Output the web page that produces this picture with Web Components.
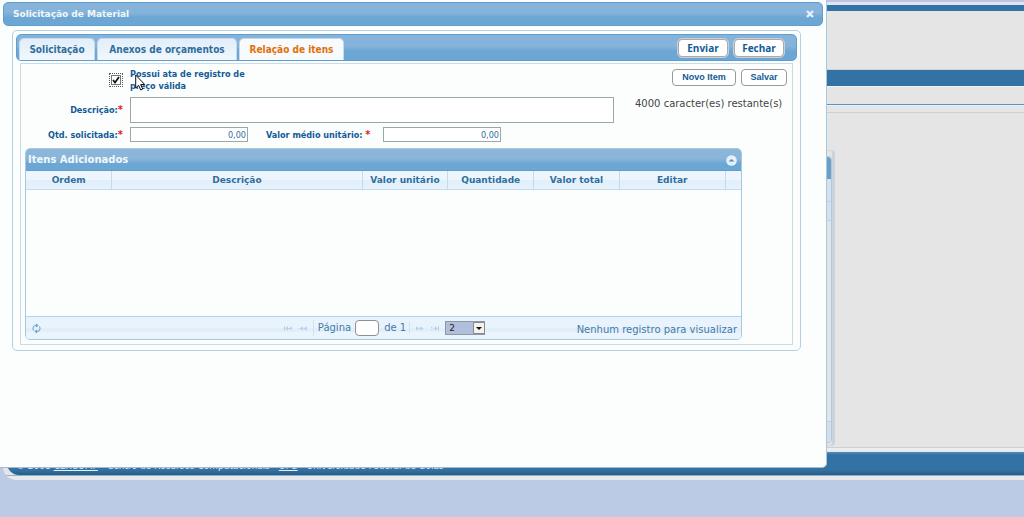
<!DOCTYPE html>
<html lang="pt-BR">
<head>
<meta charset="utf-8">
<title>Solicitação de Material</title>
<style>
html{background:#bccbe5}
body{margin:0;font:10px/12px "DejaVu Sans","Open Sans",sans-serif;color:#444;min-height:100vh;position:relative;overflow:hidden}
</style>
</head>
<body>
<app-shell></app-shell>
<material-dialog heading="Solicitação de Material">
  <tab-panel>
    <item-form></item-form>
    <items-grid></items-grid>
  </tab-panel>
</material-dialog>
<mouse-pointer></mouse-pointer>
<script>
const define = (name, html, setup) => customElements.define(name, class extends HTMLElement {
  constructor() {
    super();
    const t = document.createElement('template');
    t.innerHTML = html;
    this.attachShadow({ mode: 'open' }).append(t.content.cloneNode(true));
  }
  connectedCallback() { if (setup) setup(this, this.shadowRoot); }
});

define('app-shell', `
<style>
:host{display:flex;flex-direction:column;height:calc(100vh - 36px);background:#e5e5e5;margin-left:3px;border-radius:0 0 0 14px;overflow:hidden;border-bottom:1px solid #c4cbdc;box-sizing:border-box}
.top{flex:none;height:6px;background:#3272a4;border-top:3px solid #dde6f2;margin-top:2px;box-shadow:0 -2px #bfc3df}
.banner{flex:none;height:58px}
.menu{flex:none;height:16px;background:#3272a4;border-top:1px solid #d2d2d2;border-bottom:1px solid #f2f2f2}
.sub{flex:none;height:17px;border-bottom:1px solid #5f92bd}
.crumb{flex:none;height:6px;border-top:1px solid #e9f1f7;border-bottom:1px solid #cfcfcf}
main{flex:1;padding-top:37px;box-sizing:border-box}
.behind{box-sizing:border-box;height:calc(100% - 1px);width:calc(100% - 189px);border:1px solid #d2d8de;border-right:3px solid #cbd3dc;border-radius:4px;padding:5px 0 2px}
.inner{height:100%;box-sizing:border-box;border:1px solid #b3c8dc;border-left:0;border-radius:4px;background:#e0e6e8;display:flex;flex-direction:column}
.bar{height:22px;background:#6b9fc8;border-radius:0 4px 0 0}
.row{height:22px;background:#d5e2ec;border-bottom:1px solid #bcd0df}
.row + .row{height:18px}
.foot{height:20px;margin-top:auto;background:#d5dfe8;border-top:1px solid #c2cfda}
footer{flex:none;border-top:1px solid #cfcfcf;box-shadow:inset 0 3px #e9eef1;padding-top:4px}
.credits{height:23px;box-sizing:border-box;padding:8px 9px 0;background:linear-gradient(#5c8db3,#3272a4 3px,#3272a4 18px,#295c83);border-radius:0 0 0 12px;margin-left:4px;color:#e4eef5;font:9px/12px "DejaVu Sans",sans-serif;white-space:nowrap}
.edge{height:4px;background:#e8e9ea;border-top:1px solid #8bb2d3}
a{color:inherit}
</style>
<div class="top"></div><div class="banner"></div><div class="menu"></div><div class="sub"></div><div class="crumb"></div>
<main><div class="behind"><div class="inner"><div class="bar"></div><div class="row"></div><div class="row"></div><div class="foot"></div></div></div></main>
<footer><div class="credits">© 2008 <a href="#">CERCOMP</a> - Centro de Recursos Computacionais - <a href="#">UFG</a> - Universidade Federal de Goiás</div><div class="edge"></div></footer>
`);

define('material-dialog', `
<style>
:host{display:flex;flex-direction:column;position:absolute;top:0;left:0;width:calc(100% - 197px);height:calc(100vh - 49px);box-sizing:border-box;background:#fcfefe;border-right:1px solid #a6c9e2;border-bottom:1px solid #a6b9ce;border-radius:0 0 5px 0;padding:2px 3px 2px 3px}
header{display:flex;align-items:center;justify-content:space-between;height:24px;box-sizing:border-box;border:1px solid #5f9fcf;border-radius:5px;padding:0 7px 0 9px;background:linear-gradient(#86b3d9 45%,#6ca6d4 65%);color:#f1f8fa}
h1{font:bold 9px/12px "DejaVu Sans",sans-serif;margin:0}
button{border:0;background:none;padding:0;width:10px;height:10px;display:flex}
section{padding:4px 22px 0 9px}
</style>
<header><h1></h1><button aria-label="Fechar janela"><svg viewBox="0 0 10 10" width="10" height="10"><path d="M2 2l6 6M8 2L2 8" stroke="#e4f1fa" stroke-width="2.400"/></svg></button></header>
<section><slot></slot></section>
`, (el, r) => { r.querySelector('h1').textContent = el.getAttribute('heading'); });

define('tab-panel', `
<style>
:host{display:block;border:1px solid #b5cfe2;border-radius:5px;padding:3px 3px 5px;background:#fcfefe}
.bar{display:flex;align-items:flex-end;height:27px;box-sizing:border-box;border:1px solid #5f9fcf;border-radius:5px;padding:0 12px 0 2px;background:linear-gradient(#86b3d9 45%,#6ca6d4 65%);gap:2px}
button{font:bold 10px/14px "DejaVu Sans Condensed","DejaVu Sans",sans-serif}
[role=tab]{height:22px;border:1px solid #c5dbec;border-bottom:0;border-radius:5px 5px 0 0;background:linear-gradient(#e2eefa,#f1f7fc);color:#2e6e9e;padding:0}
[role=tab][aria-selected=true]{background:#f8fbfd;color:#e17009}
.t1{width:76px}.t2{width:140px}.t3{width:105px}
.actions{margin-left:auto;display:flex;gap:6px;align-self:center}
.actions button{font:bold 10px/12px "Open Sans",sans-serif;width:50px;height:18px;box-sizing:border-box;border:1px solid #aaa;outline:1px solid #c9cfd4;border-radius:4px;background:#fff;color:#125a95;padding:0}
.panel{margin:2px 4px 0 4px;border:1px solid #c9dbe6;padding:3px 4px 4px}
</style>
<div class="bar" role="tablist">
<button role="tab" class="t1">Solicitação</button><button role="tab" class="t2">Anexos de orçamentos</button><button role="tab" class="t3" aria-selected="true">Relação de itens</button>
<div class="actions"><button>Enviar</button><button>Fechar</button></div></div>
<div class="panel" role="tabpanel"><slot></slot></div>
`);

define('item-form', `
<style>
:host{display:block}
form{display:grid;grid-template-columns:98px 484px 1fr;column-gap:7px;grid-template-rows:30px 26px 23px;color:#125a95}
label{font:bold 9px/12px "DejaVu Sans Condensed","DejaVu Sans",sans-serif;text-align:right;white-space:nowrap}
label b{color:#e8192c;font-size:11px;line-height:10px}
.check{text-align:left;width:124px;white-space:normal;padding-top:1px}
.tick{justify-self:end;margin:6px 0 0;width:14px;height:14px;display:grid;place-items:center;border:1px dotted #555;box-sizing:border-box}
.tick input{appearance:none;margin:0;width:10px;height:10px;box-sizing:border-box;border:1px solid #777;background:#fff;grid-area:1/1}
.tick svg{grid-area:1/1;pointer-events:none}
input[type=text],textarea{font:9px/12px "DejaVu Sans Condensed","DejaVu Sans",sans-serif;color:#2e6e9e;border:1px solid #9aa8a6;background:#fff;box-sizing:border-box;border-radius:0;margin:0;padding:0 1px;text-align:right}
textarea{width:100%;height:26px;resize:none;display:block;text-align:left}
.l{align-self:center}
.num{width:118px;height:15px}
.pair{display:flex;align-items:center}
.pair label{width:110px;margin:0 7px 0 18px;text-align:left}
.buttons{display:flex;gap:5px;justify-content:flex-end;align-items:center;height:20px;padding-right:1px}
button{font:bold 9px/12px "Liberation Sans",sans-serif;color:#125a95;width:64px;height:17px;border:1px solid #999;border-radius:4px;background:#fff;padding:0;white-space:nowrap;box-sizing:border-box}
button:last-child{width:46px}
.left{color:#444;padding:1px 0 0 14px;white-space:nowrap}
</style>
<form onsubmit="return false">
<span class="tick"><input id="ata" type="checkbox" checked><svg width="8" height="8" viewBox="0 0 8 8"><path d="M1 4l2 2.500L7 1" fill="none" stroke="#111" stroke-width="1.700"/></svg></span>
<label class="check" for="ata">Possui ata de registro de preço válida</label>
<div class="buttons"><button>Novo Item</button><button>Salvar</button></div>
<label class="l" for="desc">Descrição:<b>*</b></label><textarea id="desc"></textarea><div class="left">4000 caracter(es) restante(s)</div>
<label class="l" for="qtd">Qtd. solicitada:<b>*</b></label>
<div class="pair"><input class="num" type="text" id="qtd" value="0,00"><label for="val">Valor médio unitário: <b>*</b></label><input class="num" type="text" id="val" value="0,00"></div>
</form>
`);

define('items-grid', `
<style>
:host{display:block;margin:2px 46px 0 0;border:1px solid #a6c9e2;border-radius:5px;background:#fcfefe}
header{display:flex;align-items:center;justify-content:space-between;height:21px;box-sizing:border-box;padding:1px 4px 0 2px;height:22px;background:linear-gradient(#8bb5d9 45%,#6ca6d4 70%);border-bottom:1px solid #5f9fcf;border-radius:4px 4px 0 0;color:#f1f8fa}
h2{margin:0;font:bold 10px/12px "DejaVu Sans",sans-serif}
header button{width:11px;height:11px;padding:0;border:0;background:none;display:flex}
table{width:100%;border-collapse:collapse;table-layout:fixed}
th{height:18px;padding:0;border-right:1px solid #c5dbec;border-bottom:1px solid #c5dbec;background:linear-gradient(#eff5fc 50%,#e0effb 51%,#e6f2fb);color:#2e6e9e;font:bold 9px/12px "DejaVu Sans",sans-serif;white-space:nowrap}
th:last-child{border-right:0}
.body{height:126px}
footer{display:grid;grid-template-columns:1fr auto 1fr;align-items:center;height:22px;background:linear-gradient(#e9f3fd 50%,#e3eef9 52%,#e3eef9 65%,#eaf4fd 70%);border-top:1px solid #b5d2e6;border-radius:0 0 4px 4px;padding:0 4px 0 5px;color:#427ba8}
svg{display:block}
footer button{border:0;padding:0;background:none}
.refresh{justify-self:start}
.pages{display:flex;align-items:center;gap:5px}
.pages label{display:flex;align-items:center;gap:4px;border-left:1px solid #d5e2ec;padding-left:4px}
.pages input{width:24px;height:16px;box-sizing:border-box;border:1px solid #909090;border-radius:4px;background:#fff;margin:0;font:inherit}
.of{border-right:1px solid #d5e2ec;padding-right:3px}
.size{display:grid;align-items:center;justify-items:end}
.size>*{grid-area:1/1}
.size svg{pointer-events:none}
select{appearance:none;width:40px;height:14px;border:1px solid #8d97a5;border-radius:0;background:#b1bfdc;font:9px/12px "DejaVu Sans",sans-serif;color:#222;padding:0 3px;margin:0}
.info{text-align:right;padding-top:3px}
</style>
<header><h2>Itens Adicionados</h2><button aria-label="Recolher"><svg width="11" height="11" viewBox="0 0 11 11"><circle cx="5.500" cy="5.500" r="5.300" fill="#e3f1fb"/><path d="M2.500 6.500L5.500 4l3 2.500z" fill="#5c89ae"/></svg></button></header>
<table><colgroup><col style="width:12%"><col style="width:35%"><col style="width:12%"><col style="width:12%"><col style="width:12%"><col><col style="width:16px"></colgroup>
<thead><tr><th>Ordem</th><th>Descrição</th><th>Valor unitário</th><th>Quantidade</th><th>Valor total</th><th>Editar</th><th></th></tr></thead></table>
<div class="body"></div>
<footer>
<button aria-label="Atualizar" class="refresh"><svg width="11" height="11" viewBox="0 0 11 11" fill="none" stroke="#6da8d2" stroke-width="1.100"><path d="M6.500 2.500H5a3 3 0 0 0-2.300 5M5 1L6.700 2.500 5 4M4.500 8.500H6a3 3 0 0 0 2.300-5M6 7L4.300 8.500 6 10"/></svg></button>
<div class="pages">
<button aria-label="Primeira"><svg width="10" height="8" viewBox="0 0 10 8" fill="#b9d3e7"><path d="M1 2h1v5H1zM5 2L2 4.500 5 7zM5 4h4v1H5zM9 2.500v4L6 4.500z"/></svg></button>
<button aria-label="Anterior"><svg width="10" height="8" viewBox="0 0 10 8" fill="#b9d3e7"><path d="M1 4.500l4-2v4zM5 4.500l4-2v4z"/></svg></button>
<label>Página <input aria-label="Página"></label><span class="of">de 1</span>
<button aria-label="Próxima"><svg width="10" height="8" viewBox="0 0 10 8" fill="#b9d3e7"><path d="M5 4.500l-4-2v4zM9 4.500l-4-2v4z"/></svg></button>
<button aria-label="Última"><svg width="10" height="8" viewBox="0 0 10 8" fill="#b9d3e7"><path d="M8 2h1v5H8zM5 2l3 2.500L5 7zM1 4h4v1H1zM1 2.500v4l3-2z"/></svg></button>
<span class="size"><select aria-label="Registros por página"><option>2</option></select><svg width="12" height="12" viewBox="0 0 12 12"><path fill="#f4f2ee" stroke="#888" d="M.5.5h11v11H.5z"/><path d="M3 5h6L6 8z" fill="#111"/></svg></span>
</div>
<div class="info">Nenhum registro para visualizar</div>
</footer>
`);

define('mouse-pointer', `
<style>:host{display:block;position:absolute;left:135px;top:74px;pointer-events:none}svg{display:block}</style>
<svg width="12" height="18" viewBox="0 0 12 18"><path d="M.7 1v13l3-2.700 2 4.700 2-.9-2-4.600h4z" fill="#fff" stroke="#111"/></svg>
`);
</script>
</body>
</html>
